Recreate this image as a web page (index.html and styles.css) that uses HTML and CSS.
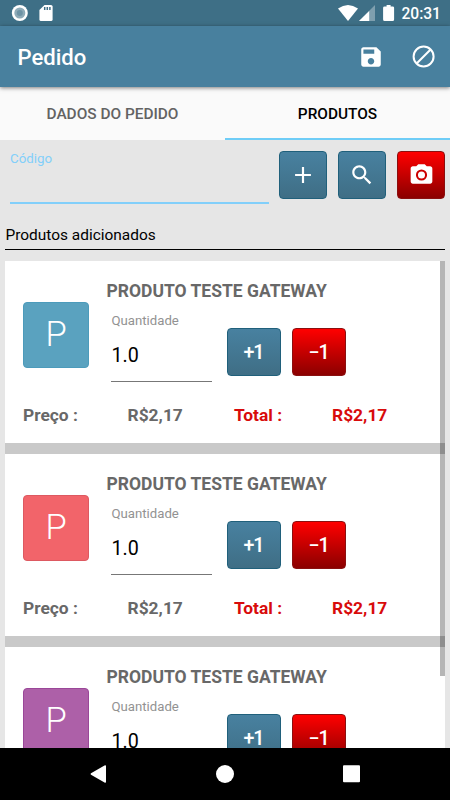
FILE: index.html
```html
<!DOCTYPE html>
<html lang="pt-BR">
<head>
<meta charset="utf-8">
<title>Pedido</title>
<link rel="stylesheet" href="styles.css">
</head>
<body>
<div class="screen">
  <div class="status">
    <svg class="status-left" width="60" height="26" viewBox="0 0 60 26"><circle cx="19.800" cy="13" r="8" fill="#fff"/><circle cx="19.800" cy="13" r="5.500" fill="#8eabb8"/><circle cx="19.800" cy="13" r="3" fill="#6d93a5"/><path d="M44.500 5H51q1.600 0 1.600 1.600V19.400q0 1.600-1.600 1.600H41q-1.600 0-1.600-1.600V10z" fill="#fff"/><path d="M44.700 7v3M47.300 7v3M49.900 7v3" stroke="#3e6f86" stroke-width="1.500"/></svg>
    <svg width="60" height="26" viewBox="0 0 60 26"><path d="M0 8.500Q10 1.300 20 8.500L10 21z" fill="#fff"/><path d="M37 5v16H21z" fill="#7f9fae"/><path d="M31.200 11v10H21z" fill="#fff"/><path d="M48.600 5h4v1.500h2q1.500 0 1.500 1.300v11.700q0 1.500-1.500 1.500h-8q-1.500 0-1.500-1.500V7.800q0-1.300 1.500-1.300h2z" fill="#fff"/></svg>
    <span class="clock">20:31</span>
  </div>
  <header class="appbar">
    <h1>Pedido</h1>
    <svg width="26" height="26" viewBox="0 0 24 24" fill="#fff"><path d="M17 3H5c-1.110 0-2 .9-2 2v14c0 1.100.89 2 2 2h14c1.100 0 2-.9 2-2V7l-4-4zm-5 16c-1.660 0-3-1.340-3-3s1.340-3 3-3 3 1.340 3 3-1.340 3-3 3zm3-10H5V5h10v4z"/></svg>
    <svg class="cancel" width="26" height="26" viewBox="0 0 26 26" fill="none" stroke="#fff" stroke-width="2"><circle cx="12.600" cy="12.500" r="10"/><path d="M5.600 19.500L19.600 5.500"/></svg>
  </header>
  <nav class="tabs">
    <div class="tab">DADOS DO PEDIDO</div>
    <div class="tab active">PRODUTOS</div>
  </nav>
  <main>
    <div class="search">
      <div class="code">Código</div>
      <div class="btn square"><svg width="26" height="26" viewBox="0 0 24 24"><path d="M19.300 13h-6.300v6.300h-2V13H4.700v-2H11V4.700h2V11h6.300z" fill="#fff"/></svg></div>
      <div class="btn square"><svg width="26" height="26" viewBox="0 0 24 24"><path d="M15.500 14h-.79l-.28-.27C15.410 12.590 16 11.110 16 9.500 16 5.910 13.090 3 9.500 3S3 5.910 3 9.500 5.910 16 9.500 16c1.610 0 3.090-.59 4.230-1.570l.27.28v.79l5 4.990L20.490 19l-4.990-5zm-6 0C7.010 14 5 11.990 5 9.500S7.010 5 9.500 5 14 7.010 14 9.500 11.990 14 9.500 14z" fill="#fff"/></svg></div>
      <div class="btn square red"><svg width="27" height="26" viewBox="0 0 24 24" fill="#fff"><path d="M9 2L7.170 4H4c-1.100 0-2 .9-2 2v12c0 1.100.9 2 2 2h16c1.100 0 2-.9 2-2V6c0-1.100-.9-2-2-2h-3.170L15 2H9z"/><circle cx="12" cy="12" r="4.200" fill="none" stroke="#c00" stroke-width="1.900"/></svg></div>
    </div>
    <h2>Produtos adicionados</h2>
    <div class="list">
      <article class="card">
        <div class="avatar">P</div>
        <div class="info"><h3>PRODUTO TESTE GATEWAY</h3>
          <div class="qty"><div class="field"><span class="label">Quantidade</span><span class="value">1.0</span></div><div class="btn step">+1</div><div class="btn step red">−1</div></div>
        </div>
        <div class="prices"><span>Preço :</span><span>R$2,17</span><span class="total">Total :</span><span class="total">R$2,17</span></div>
      </article>
      <article class="card">
        <div class="avatar coral">P</div>
        <div class="info"><h3>PRODUTO TESTE GATEWAY</h3>
          <div class="qty"><div class="field"><span class="label">Quantidade</span><span class="value">1.0</span></div><div class="btn step">+1</div><div class="btn step red">−1</div></div>
        </div>
        <div class="prices"><span>Preço :</span><span>R$2,17</span><span class="total">Total :</span><span class="total">R$2,17</span></div>
      </article>
      <article class="card">
        <div class="avatar purple">P</div>
        <div class="info"><h3>PRODUTO TESTE GATEWAY</h3>
          <div class="qty"><div class="field"><span class="label">Quantidade</span><span class="value">1.0</span></div><div class="btn step">+1</div><div class="btn step red">−1</div></div>
        </div>
      </article>
      <div class="scrollbar"></div>
    </div>
  </main>
  <footer class="navbar">
    <svg width="450" height="52" viewBox="0 0 450 52" fill="#fff"><path d="M91 25.300L104.500 17.400q1.500-.8 1.500.8v15.600q0 1.600-1.500.8L91 26.700q-1-.7 0-1.400z"/><circle cx="225" cy="26" r="9"/><rect x="343" y="17.300" width="17" height="17" rx="1"/></svg>
  </footer>
</div>
</body>
</html>
```

FILE: styles.css
```css
* { box-sizing: border-box; }
body { margin: 0; font-family: Roboto, "Liberation Sans", sans-serif; }
h1, h2, h3 { margin: 0; }
svg { display: block; flex: none; }
.screen { width: 450px; height: 800px; display: flex; flex-direction: column; overflow: hidden; background: #e6e6e6; }
.status { flex: none; height: 26px; display: flex; align-items: center; background: #3e6f86; color: #fff; padding-right: 9px; }
.status-left { margin-right: auto; }
.clock { width: 40px; margin-left: 3px; text-align: right; font-size: 15.600px; font-weight: 500; line-height: 26px; padding-top: 2px; white-space: nowrap; }
.appbar { flex: none; height: 61px; display: flex; align-items: center; padding: 0 13px 0 17.500px; background: #48809e; color: #fff; box-shadow: 0 1px 4px rgba(0, 0, 0, .5); z-index: 1; }
.appbar h1 { flex: 1; font-size: 22.100px; font-weight: 500; line-height: 30px; padding-top: 1px; }
.cancel { margin-left: 27px; }
.tabs { flex: none; height: 53px; display: grid; grid-template-columns: 1fr 1fr; background: #fafafa; }
.tab { display: flex; align-items: center; justify-content: center; padding-top: 1px; font-size: 15.400px; font-weight: 500; color: #636363; }
.tab.active { padding-top: 3px; color: #000; border-bottom: 2px solid #6fcdf7; }
main { flex: 1; min-height: 0; display: flex; flex-direction: column; padding: 0 5px; }
.search { flex: none; height: 70px; display: flex; align-items: flex-start; gap: 11px; padding-top: 11px; }
.code { width: 260px; height: 53px; margin-left: 5px; margin-right: -1px; border-bottom: 2px solid #82cffa; font-size: 13.300px; line-height: 16px; color: #82cffa; }
.btn { display: flex; align-items: center; justify-content: center; height: 48px; border-radius: 4px; border: 1px solid #20607b; background: linear-gradient(#4881a0, #3f6e85); color: #fff; }
.btn.red { border-color: #8b1010; background: linear-gradient(#ff0000, #8b0000); }
.square { width: 48px; flex: none; }
h2 { flex: none; height: 40px; padding: 15px 0 0 .5px; border-bottom: 1px solid #000; font-size: 15.450px; font-weight: 400; line-height: 20px; }
.list { position: relative; flex: 1; min-height: 0; margin-top: 11px; overflow: hidden; background: #c9c9c9; }
.card { display: grid; grid-template-columns: 66px 1fr; grid-template-rows: 126px 56px; column-gap: 17.500px; height: 182px; margin-bottom: 11px; padding-left: 18px; background: #fff; }
.avatar { width: 66px; height: 66px; margin-top: 41px; border: 1px solid #4c9bbb; border-radius: 4px; background: #5aa2bf; color: #fff; font-size: 34.500px; font-weight: 300; line-height: 63px; text-align: center; }
.coral { background: #f2646a; border-color: #dd5961; }
.purple { background: #ad60a8; border-color: #9a4798; }
.info h3 { margin-top: 19px; font-size: 17.500px; font-weight: 700; line-height: 22px; color: #686868; }
.qty { display: flex; align-items: flex-start; margin-top: 10px; }
.field { width: 101px; height: 70px; margin-left: 4px; padding-left: 1px; border-bottom: 1px solid #777; }
.label, .value { display: block; }
.label { font-size: 13.200px; line-height: 18px; color: #929292; }
.value { margin-top: 14px; font-size: 19.700px; line-height: 24px; }
.step { width: 54px; margin: 16px -4px 0 15px; font-size: 19.700px; font-weight: 500; letter-spacing: -1px; }
.prices { grid-column: 1 / -1; display: grid; grid-template-columns: 104.500px 106.500px 98px 1fr; padding-top: 17px; font-size: 17.400px; font-weight: 700; line-height: 22px; color: #686868; }
.total { color: #d80b0b; }
.scrollbar { position: absolute; top: 0; right: 0; width: 5px; height: 415px; background: rgba(0, 0, 0, .29); }
.navbar { flex: none; height: 52px; background: #000; }
```
